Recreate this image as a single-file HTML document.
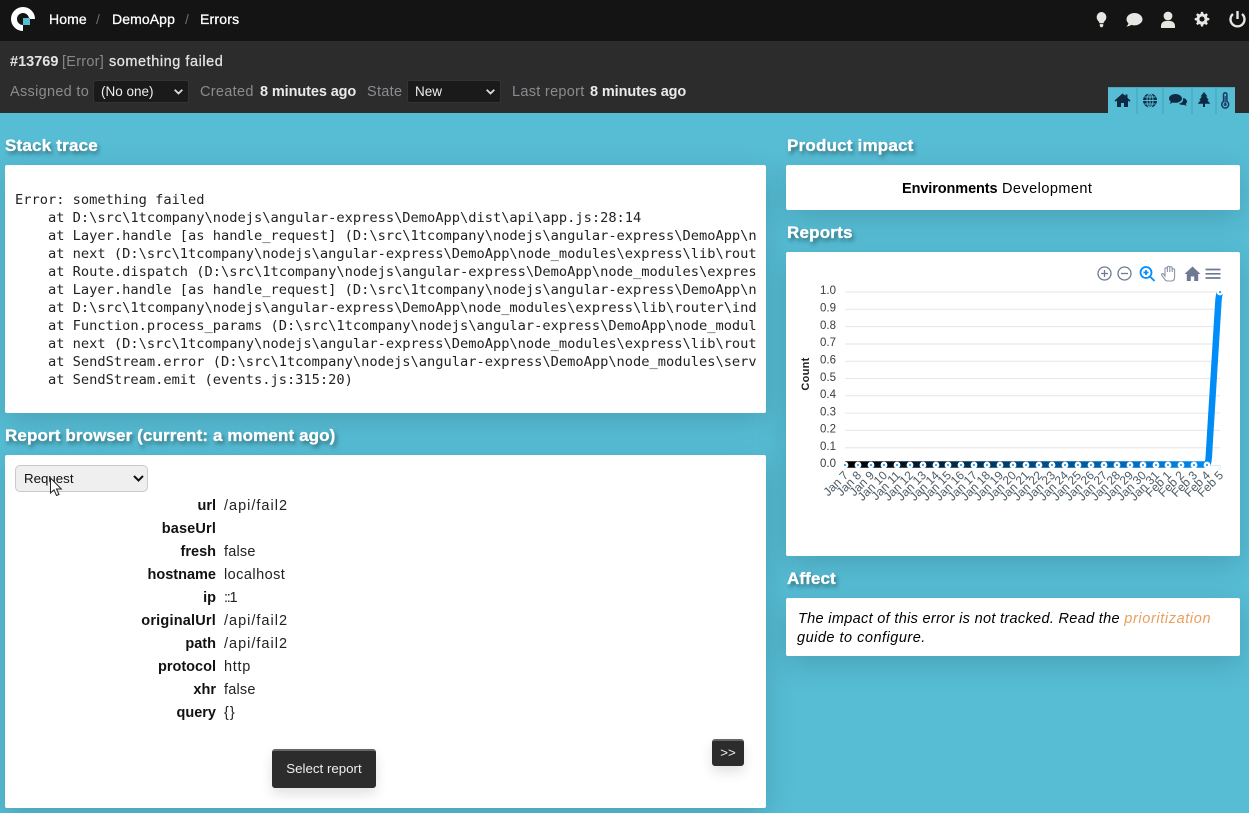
<!DOCTYPE html>
<html><head><meta charset="utf-8"><title>Errors</title>
<style>
*{box-sizing:border-box}
html,body{margin:0;padding:0;width:1249px;height:813px;overflow:hidden;background:#56bdd5;font-family:"Liberation Sans",sans-serif;color:#000}
.a{position:absolute;white-space:nowrap;line-height:18px}
.top{position:absolute;left:0;top:0;width:1249px;height:41px;background:#141414}
.sub{position:absolute;left:0;top:41px;width:1249px;height:72px;background:#2c2c2c}
.nav{color:#fff;font-size:14px;top:10px;-webkit-text-stroke:.3px #fff}
.sl{color:#6f6f73;font-size:14px;top:10px}
.g{color:#8b8b90;font-size:14.5px;top:83px}
.w{color:#eaeaea;font-size:14.5px;font-weight:bold;top:83px}
.h{color:#fff;font-weight:bold;font-size:17px;text-shadow:2px 3px 4px rgba(0,0,0,.45);-webkit-text-stroke:.35px #fff}
.p{position:absolute;background:#fff;border-radius:2px;box-shadow:0 8px 30px rgba(0,0,0,.15)}
.dk{position:absolute;background:#1a1a1a;border:1px solid #333;border-radius:3px;height:23px;color:#eee;font-size:13.5px;line-height:21px;padding-left:7px}
pre{position:absolute;left:15px;top:191px;margin:0;width:742px;height:200px;overflow:hidden;font:13.7px/18px "DejaVu Sans Mono",monospace;color:#222}
.k{font-weight:bold;font-size:14.5px;text-align:right;right:1033px;color:#111}
.v{font-size:14.5px;left:224px;color:#222}
.btn{position:absolute;background:#2c2c2c;color:#eee;border-top:2px solid #666;border-radius:3px;box-shadow:0 6px 12px rgba(0,0,0,.12);text-align:center}
.tabs{position:absolute;left:1108px;top:87px;width:127px;height:26px;background:#56bdd5;border-top:1px solid #4aa9c0}
.tabs i{position:absolute;top:0;width:2px;height:26px;background:#4bb0c8}
</style></head><body>
<div class="top"></div><div class="sub"></div>

<svg style="position:absolute;left:8px;top:6px" width="30" height="28" viewBox="0 0 30 28">
<path d="M15 22A9 9 0 1 1 24 13" fill="none" stroke="#fff" stroke-width="6"/>
<rect x="15" y="12" width="7" height="7" fill="#56bdd5"/>
</svg>
<div class="a nav" style="left:49px;letter-spacing:.1px">Home</div>
<div class="a sl" style="left:96px">/</div>
<div class="a nav" style="left:112px;letter-spacing:.1px">DemoApp</div>
<div class="a sl" style="left:185px">/</div>
<div class="a nav" style="left:200px;letter-spacing:.2px">Errors</div>

<svg style="position:absolute;left:1090px;top:8px" width="159" height="24" viewBox="0 0 159 24" fill="#e6e6e2">
<g transform="translate(11.5 4) scale(.87) translate(-12 -4)"><path d="M12 4a6 6 0 0 0-4 10c1 1 1.500 2 1.700 3h4.600c.2-1 .7-2 1.700-3a6 6 0 0 0-4-10zM10 18h4v2l-1 1.500h-2L10 20z"/></g>
<path transform="translate(0 1)" d="M44.500 4c-4.400 0-8 2.800-8 6.300 0 1.600.8 3 2 4.100-.3 1.200-1.200 2.300-2.200 3.100 2 0 3.700-.7 4.900-1.600 1 .3 2.100.5 3.300.5 4.400 0 8-2.800 8-6.100S48.900 4 44.500 4z"/>
<g transform="translate(0 -.5)"><circle cx="78" cy="8.500" r="4.400"/><path d="M71 20.500v-2c0-3 2.300-5 5-5h4c2.700 0 5 2 5 5v2z"/></g>
<g transform="translate(112 11.500) scale(.85) translate(-112 -13)"><path fill-rule="evenodd" d="M110.800 4h2.400l.5 2.300 1.500.6 2-1.200 1.700 1.700-1.200 2 .6 1.500 2.300.5v2.400l-2.300.5-.6 1.500 1.200 2-1.700 1.700-2-1.200-1.500.6-.5 2.300h-2.400l-.5-2.300-1.500-.6-2 1.200-1.700-1.700 1.200-2-.6-1.500-2.300-.5v-2.400l2.300-.5.6-1.500-1.200-2 1.700-1.700 2 1.200 1.500-.6zM112 9.500a3 3 0 1 0 0 6 3 3 0 0 0 0-6z"/></g>
<g transform="translate(0 -.5)"><path d="M147.500 3.500v8" stroke="#e6e6e2" stroke-width="2.400" fill="none"/><path d="M143 6.500a7 7 0 1 0 9 0" stroke="#e6e6e2" stroke-width="2.400" fill="none"/></g>
</svg>

<div class="a" style="left:10px;top:53px;font-size:14.500px;font-weight:bold;color:#e4e4e4">#13769</div>
<div class="a" style="left:62px;top:53px;font-size:14.500px;color:#88888c;letter-spacing:.25px">[Error]</div>
<div class="a" style="left:109px;top:53px;font-size:14.500px;color:#e4e4e4;letter-spacing:.55px;-webkit-text-stroke:.25px #e4e4e4">something failed</div>

<div class="a g" style="left:10px;letter-spacing:.3px">Assigned to</div>
<div class="dk" style="left:93px;top:80px;width:96px">(No one)<svg style="position:absolute;right:5px;top:8px" width="9" height="6"><path d="M.7.7l3.800 3.800L8.300.7" stroke="#ddd" stroke-width="1.800" fill="none"/></svg></div>
<div class="a g" style="left:200px;letter-spacing:.3px">Created</div>
<div class="a w" style="left:260px;letter-spacing:-.1px">8 minutes ago</div>
<div class="a g" style="left:367px;letter-spacing:.3px">State</div>
<div class="dk" style="left:407px;top:80px;width:94px">New<svg style="position:absolute;right:5px;top:8px" width="9" height="6"><path d="M.7.7l3.800 3.800L8.300.7" stroke="#ddd" stroke-width="1.800" fill="none"/></svg></div>
<div class="a g" style="left:512px;letter-spacing:.3px">Last report</div>
<div class="a w" style="left:590px;letter-spacing:-.1px">8 minutes ago</div>

<div class="tabs"><i style="left:28px"></i><i style="left:54px"></i><i style="left:83px"></i><i style="left:107px"></i></div>
<svg style="position:absolute;left:1108px;top:87px" width="127" height="26" viewBox="0 0 127 26" fill="#0e2a42">
<path d="M14.500 6.500L6.500 13.500l1.200 1.200 1.300-1.100V20h4v-4h3v4h4v-6.400l1.300 1.100 1.200-1.200-3-2.600V7.500h-2v1.300z"/>
<circle cx="42" cy="13.500" r="7"/><path d="M35 13.500h14M42 6.500v14M36.500 10h11M36.500 17h11" stroke="#56bdd5" stroke-width="1" fill="none"/><ellipse cx="42" cy="13.500" rx="3" ry="7" fill="none" stroke="#56bdd5"/>
<path d="M67.500 7c-3.600 0-6.500 2-6.500 4.500 0 1.200.7 2.300 1.800 3.100-.2.800-.7 1.500-1.400 2 1.500 0 2.600-.5 3.500-1.100.8.200 1.700.3 2.600.3 3.600 0 6.500-2 6.500-4.300S71.100 7 67.500 7z"/><path d="M75 11c2.600.5 4 1.900 4 3.500 0 1-.5 1.800-1.300 2.400.1.700.6 1.300 1.100 1.700-1.200 0-2.100-.3-2.800-.9-.8.200-3.300.3-5.300-1 3.300-.4 5-2.700 4.300-5.700z"/>
<path d="M96 5l3.500 4.500H98l2.800 3.500h-1.500l3 3.800H97v3.200h-2v-3.200h-5.300l3-3.800h-1.500L94 9.500h-1.500z"/>
<path d="M115.500 7.500a1.700 1.700 0 0 1 3.400 0v7a3.500 3.500 0 1 1-3.400 0z" fill="none" stroke="#1a3a5c" stroke-width="1.500"/><circle cx="117.200" cy="17.500" r="1.600" fill="#1d4a78"/><rect x="116.600" y="9" width="1.200" height="7" fill="#1d4a78"/>
</svg>

<div class="a h" style="left:5px;top:137px;letter-spacing:.2px">Stack trace</div>
<div class="p" style="left:5px;top:165px;width:761px;height:248px"></div>
<pre>Error: something failed
    at D:\src\1tcompany\nodejs\angular-express\DemoApp\dist\api\app.js:28:14
    at Layer.handle [as handle_request] (D:\src\1tcompany\nodejs\angular-express\DemoApp\node_modules\express\lib\router\layer.js:95:5)
    at next (D:\src\1tcompany\nodejs\angular-express\DemoApp\node_modules\express\lib\router\route.js:137:13)
    at Route.dispatch (D:\src\1tcompany\nodejs\angular-express\DemoApp\node_modules\express\lib\router\route.js:112:3)
    at Layer.handle [as handle_request] (D:\src\1tcompany\nodejs\angular-express\DemoApp\node_modules\express\lib\router\layer.js:95:5)
    at D:\src\1tcompany\nodejs\angular-express\DemoApp\node_modules\express\lib\router\index.js:281:22
    at Function.process_params (D:\src\1tcompany\nodejs\angular-express\DemoApp\node_modules\express\lib\router\index.js:335:12)
    at next (D:\src\1tcompany\nodejs\angular-express\DemoApp\node_modules\express\lib\router\index.js:275:10)
    at SendStream.error (D:\src\1tcompany\nodejs\angular-express\DemoApp\node_modules\serve-static\index.js:121:7)
    at SendStream.emit (events.js:315:20)</pre>

<div class="a h" style="left:5px;top:427px;letter-spacing:.12px">Report browser (current: a moment ago)</div>
<div class="p" style="left:5px;top:455px;width:761px;height:353px"></div>
<div class="a" style="left:15px;top:465px;width:133px;height:27px;background:#efefef;border:1px solid #ccc9c0;border-radius:5px;font-size:13.300px;line-height:25px;padding-left:8px;color:#111">Request<svg style="position:absolute;right:3px;top:9px" width="11" height="7"><path d="M1 1l4.500 4.500L10 1" stroke="#111" stroke-width="2" fill="none"/></svg></div>
<svg style="position:absolute;left:49px;top:477px" width="14" height="20"><path d="M1.500 1v15l3.500-3.200 2.500 5.700 2.500-1-2.500-5.500h4.800z" fill="#fff" stroke="#222" stroke-width="1"/></svg>

<div class="a k" style="top:497px">url</div><div class="a v" style="top:497px;letter-spacing:1px">/api/fail2</div>
<div class="a k" style="top:520px;letter-spacing:.15px">baseUrl</div>
<div class="a k" style="top:543px">fresh</div><div class="a v" style="top:543px;letter-spacing:.2px">false</div>
<div class="a k" style="top:566px">hostname</div><div class="a v" style="top:566px;letter-spacing:.45px">localhost</div>
<div class="a k" style="top:589px">ip</div><div class="a v" style="top:589px;letter-spacing:-1.300px">::1</div>
<div class="a k" style="top:612px;letter-spacing:.2px">originalUrl</div><div class="a v" style="top:612px;letter-spacing:1px">/api/fail2</div>
<div class="a k" style="top:635px">path</div><div class="a v" style="top:635px;letter-spacing:1px">/api/fail2</div>
<div class="a k" style="top:658px">protocol</div><div class="a v" style="top:658px;letter-spacing:.7px">http</div>
<div class="a k" style="top:681px">xhr</div><div class="a v" style="top:681px;letter-spacing:.2px">false</div>
<div class="a k" style="top:704px">query</div><div class="a v" style="top:704px;letter-spacing:1px">{}</div>

<div class="btn" style="left:272px;top:749px;width:104px;height:39px;font-size:13.300px;line-height:35px">Select report</div>
<div class="btn" style="left:712px;top:739px;width:32px;height:27px;font-size:13.300px;line-height:24px">&gt;&gt;</div>

<div class="a h" style="left:787px;top:137px;letter-spacing:.2px">Product impact</div>
<div class="p" style="left:786px;top:165px;width:454px;height:45px"></div>
<div class="a" style="left:902px;top:180px;font-size:14.500px;font-weight:bold;letter-spacing:-.1px">Environments</div>
<div class="a" style="left:1002px;top:180px;font-size:14.500px;letter-spacing:.45px">Development</div>

<div class="a h" style="left:787px;top:224px;letter-spacing:.2px">Reports</div>
<div class="p" style="left:786px;top:252px;width:454px;height:304px"></div>
<svg style="position:absolute;left:786px;top:252px" width="454" height="304" viewBox="786 252 454 304" font-family="Liberation Sans,sans-serif">
<defs><linearGradient id="lg" gradientUnits="userSpaceOnUse" x1="845" y1="0" x2="1220" y2="0"><stop offset="0" stop-color="#000"/><stop offset="1" stop-color="#008ffb"/></linearGradient></defs>
<g stroke="#e6e6e6" stroke-width="1"><path d="M845 292H1220M845 309.300H1220M845 326.600H1220M845 344H1220M845 361.300H1220M845 378.500H1220M845 395.800H1220M845 413.100H1220M845 430.400H1220M845 447.700H1220M845 465.500H1220"/><path d="M845 465v5M1220 465v5"/></g>
<g font-size="11.500" fill="#373d3f" text-anchor="end"><text x="836" y="294">1.0</text><text x="836" y="311.500">0.9</text><text x="836" y="329">0.8</text><text x="836" y="346">0.7</text><text x="836" y="363.500">0.6</text><text x="836" y="381">0.5</text><text x="836" y="398">0.4</text><text x="836" y="415.500">0.3</text><text x="836" y="432.500">0.2</text><text x="836" y="450">0.1</text><text x="836" y="467">0.0</text></g>
<text transform="translate(809 374) rotate(-90)" text-anchor="middle" font-size="11" font-weight="bold" fill="#222" letter-spacing=".3">Count</text>
<path d="M845 464.500H1207C1208.500 464.500 1209 455 1209.500 445L1218.500 300Q1219 295 1220 292" fill="none" stroke="url(#lg)" stroke-width="6.500"/>
<g fill="#008ffb" stroke="#fff" stroke-width="2.400"><circle cx="845" cy="465" r="2.200"/><circle cx="858" cy="465" r="2.200"/><circle cx="871" cy="465" r="2.200"/><circle cx="884" cy="465" r="2.200"/><circle cx="897" cy="465" r="2.200"/><circle cx="910" cy="465" r="2.200"/><circle cx="923" cy="465" r="2.200"/><circle cx="936" cy="465" r="2.200"/><circle cx="948" cy="465" r="2.200"/><circle cx="961" cy="465" r="2.200"/><circle cx="974" cy="465" r="2.200"/><circle cx="987" cy="465" r="2.200"/><circle cx="1000" cy="465" r="2.200"/><circle cx="1013" cy="465" r="2.200"/><circle cx="1026" cy="465" r="2.200"/><circle cx="1039" cy="465" r="2.200"/><circle cx="1052" cy="465" r="2.200"/><circle cx="1065" cy="465" r="2.200"/><circle cx="1078" cy="465" r="2.200"/><circle cx="1091" cy="465" r="2.200"/><circle cx="1104" cy="465" r="2.200"/><circle cx="1117" cy="465" r="2.200"/><circle cx="1130" cy="465" r="2.200"/><circle cx="1143" cy="465" r="2.200"/><circle cx="1156" cy="465" r="2.200"/><circle cx="1168" cy="465" r="2.200"/><circle cx="1181" cy="465" r="2.200"/><circle cx="1194" cy="465" r="2.200"/><circle cx="1207" cy="465" r="2.200"/><circle cx="1220" cy="292" r="2.200"/></g>
<g font-size="12" fill="#4c5a63" text-anchor="end">
<text transform="translate(849 476) rotate(-45)">Jan 7</text><text transform="translate(862 476) rotate(-45)">Jan 8</text><text transform="translate(875 476) rotate(-45)">Jan 9</text><text transform="translate(888 476) rotate(-45)">Jan 10</text><text transform="translate(901 476) rotate(-45)">Jan 11</text><text transform="translate(914 476) rotate(-45)">Jan 12</text><text transform="translate(927 476) rotate(-45)">Jan 13</text><text transform="translate(940 476) rotate(-45)">Jan 14</text><text transform="translate(952 476) rotate(-45)">Jan 15</text><text transform="translate(965 476) rotate(-45)">Jan 16</text><text transform="translate(978 476) rotate(-45)">Jan 17</text><text transform="translate(991 476) rotate(-45)">Jan 18</text><text transform="translate(1004 476) rotate(-45)">Jan 19</text><text transform="translate(1017 476) rotate(-45)">Jan 20</text><text transform="translate(1030 476) rotate(-45)">Jan 21</text><text transform="translate(1043 476) rotate(-45)">Jan 22</text><text transform="translate(1056 476) rotate(-45)">Jan 23</text><text transform="translate(1069 476) rotate(-45)">Jan 24</text><text transform="translate(1082 476) rotate(-45)">Jan 25</text><text transform="translate(1095 476) rotate(-45)">Jan 26</text><text transform="translate(1108 476) rotate(-45)">Jan 27</text><text transform="translate(1121 476) rotate(-45)">Jan 28</text><text transform="translate(1134 476) rotate(-45)">Jan 29</text><text transform="translate(1147 476) rotate(-45)">Jan 30</text><text transform="translate(1160 476) rotate(-45)">Jan 31</text><text transform="translate(1172 476) rotate(-45)">Feb 1</text><text transform="translate(1185 476) rotate(-45)">Feb 2</text><text transform="translate(1198 476) rotate(-45)">Feb 3</text><text transform="translate(1211 476) rotate(-45)">Feb 4</text><text transform="translate(1224 476) rotate(-45)">Feb 5</text></g>
<g fill="none" stroke="#6e7a94" stroke-width="1.300"><circle cx="1104.500" cy="273.500" r="6.500"/><path d="M1101 273.500h7M1104.500 270v7"/><circle cx="1124.500" cy="273.500" r="6.500"/><path d="M1121 273.500h7"/></g>
<g fill="none" stroke="#008ffb" stroke-width="1.800"><circle cx="1146" cy="272.500" r="5.500"/><path d="M1150 276.500l4.500 4.500M1143.500 272.500h5M1146 270v5"/></g>
<path d="M1165 276V269a1.200 1.200 0 0 1 2.400 0V272V267.500a1.200 1.200 0 0 1 2.400 0V272V268a1.200 1.200 0 0 1 2.400 0V272V270a1.200 1.200 0 0 1 2.400 0V277q0 4-3.500 4h-3.500q-2 0-3-2l-3-4q-.5-1.500 1.500-1.500z" fill="none" stroke="#8a93a6" stroke-width="1.100"/>
<path d="M1192.500 266.500l-8 7.500h2.300v7h4v-4.500h3.400v4.500h4v-7h2.300z" fill="#6e7a94"/>
<path d="M1205.500 269.500h15M1205.500 273.800h15M1205.500 278h15" stroke="#6e7a94" stroke-width="1.700" fill="none"/>
</svg>

<div class="a h" style="left:787px;top:570px;letter-spacing:.1px">Affect</div>
<div class="p" style="left:786px;top:598px;width:454px;height:58px"></div>
<div class="a" style="left:798px;top:610px;font-size:14.500px;font-style:italic;letter-spacing:.32px">The impact of this error is not tracked. Read the <span style="color:#e9a05c;letter-spacing:.62px">prioritization</span></div>
<div class="a" style="left:797px;top:629px;font-size:14.500px;font-style:italic;letter-spacing:.5px">guide to configure.</div>
</body></html>
